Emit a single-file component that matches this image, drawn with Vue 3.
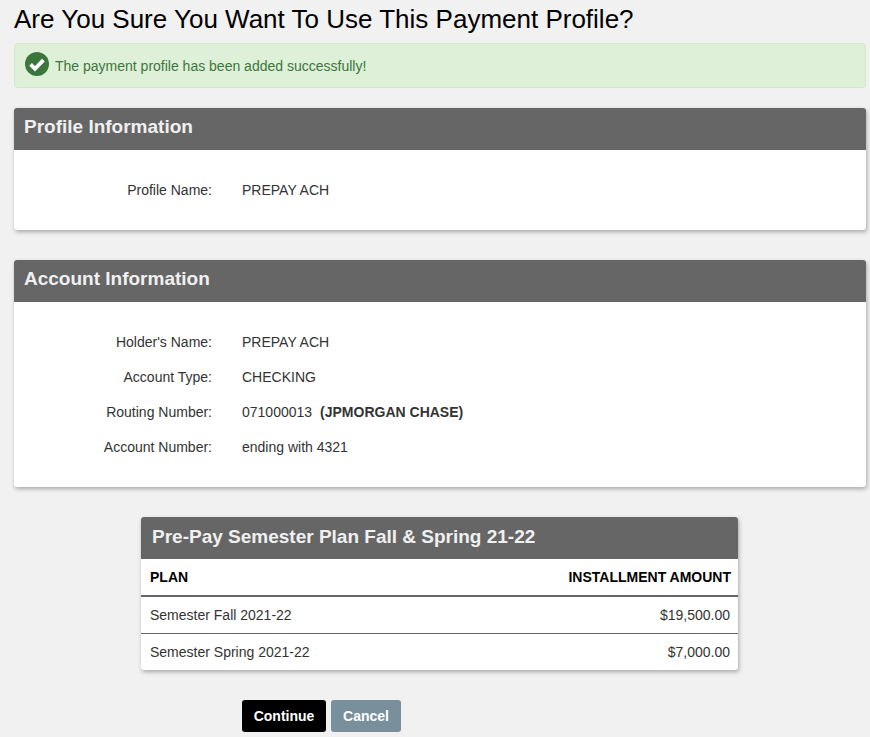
<template>
  <div class="page">
    <h1 class="page-title">Are You Sure You Want To Use This Payment Profile?</h1>

    <div class="alert-success">
      <svg class="alert-icon" width="24" height="24" viewBox="0 0 24 24">
        <circle cx="12" cy="12" r="12" fill="#3c763d" />
        <path d="M5.6 12.4l4.4 4.4 8.4-8.6" fill="none" stroke="#fff" stroke-width="3.8" />
      </svg>
      <span>The payment profile has been added successfully!</span>
    </div>

    <section class="panel profile-panel">
      <h2 class="panel-title">Profile Information</h2>
      <div class="panel-body">
        <div class="field-row">
          <span class="field-label">Profile Name:</span>
          <span class="field-value">PREPAY ACH</span>
        </div>
      </div>
    </section>

    <section class="panel account-panel">
      <h2 class="panel-title">Account Information</h2>
      <div class="panel-body">
        <div v-for="field in accountFields" :key="field.label" class="field-row">
          <span class="field-label">{{ field.label }}</span>
          <span class="field-value">{{ field.value }}<b v-if="field.bank" class="bank-name">(JPMORGAN CHASE)</b></span>
        </div>
      </div>
    </section>

    <section class="panel plan-panel">
      <h2 class="panel-title">Pre-Pay Semester Plan Fall &amp; Spring 21-22</h2>
      <table class="plan-table">
        <thead>
          <tr>
            <th>PLAN</th>
            <th class="amount">INSTALLMENT AMOUNT</th>
          </tr>
        </thead>
        <tbody>
          <tr v-for="row in planRows" :key="row.name">
            <td>{{ row.name }}</td>
            <td class="amount">{{ row.amount }}</td>
          </tr>
        </tbody>
      </table>
    </section>

    <div class="actions">
      <button class="btn btn-continue">Continue</button>
      <button class="btn btn-cancel">Cancel</button>
    </div>
  </div>
</template>

<script setup>
const accountFields = [
  { label: "Holder's Name:", value: 'PREPAY ACH' },
  { label: 'Account Type:', value: 'CHECKING' },
  { label: 'Routing Number:', value: '071000013', bank: true },
  { label: 'Account Number:', value: 'ending with 4321' }
];

const planRows = [
  { name: 'Semester Fall 2021-22', amount: '$19,500.00' },
  { name: 'Semester Spring 2021-22', amount: '$7,000.00' }
];
</script>

<style>
html,
body {
  background: #f1f1f1;
}
</style>

<style scoped>
.page {
  height: 737px;
  overflow: hidden;
  padding: 0 4px 0 14px;
  box-sizing: border-box;
  font-family: 'Liberation Sans', Arial, sans-serif;
  font-size: 14px;
  color: #333;
  background: #f1f1f1;
}

.page-title {
  margin: 0;
  height: 43px;
  line-height: 39px;
  font-size: 26px;
  font-weight: 400;
  color: #000;
}

.alert-success {
  display: flex;
  align-items: center;
  gap: 6px;
  height: 45px;
  box-sizing: border-box;
  padding: 0 10px;
  background: #dff0d8;
  border: 1px solid #d6e9c6;
  border-radius: 4px;
  color: #3c763d;
}

.alert-icon {
  flex: none;
  margin-top: -3px;
}

.panel {
  background: #fff;
  border-radius: 3px;
  box-shadow: 1px 2px 4px rgba(0, 0, 0, 0.3);
}

.profile-panel {
  margin-top: 20px;
}

.account-panel {
  margin-top: 30px;
}

.plan-panel {
  width: 597px;
  margin: 30px 0 0 127px;
}

.panel-title {
  margin: 0;
  height: 42px;
  line-height: 38px;
  padding-left: 10px;
  background: #666;
  border-radius: 3px 3px 0 0;
  color: #f0f0f0;
  font-size: 19px;
  font-weight: 700;
}

.plan-panel .panel-title {
  padding-left: 11px;
  line-height: 40px;
}

.panel-body {
  padding: 23px 0 22px;
}

.field-row {
  display: flex;
  gap: 30px;
  height: 35px;
  line-height: 35px;
}

.field-label {
  width: 198px;
  text-align: right;
}

.bank-name {
  margin-left: 8px;
}

.plan-table {
  width: 100%;
  border-collapse: collapse;
  font-size: 14px;
}

.plan-table th {
  height: 36px;
  padding: 0 7px 0 9px;
  text-align: left;
  color: #000;
  font-size: 14px;
  border-bottom: 2px solid #666;
}

.plan-table td {
  height: 36px;
  padding: 0 8px 0 9px;
  border-top: 1px solid #666;
}

.plan-table tbody tr:first-child td {
  border-top: none;
}

.plan-table .amount {
  text-align: right;
}

.actions {
  display: flex;
  gap: 5px;
  margin: 30px 0 0 228px;
}

.btn {
  height: 32px;
  border: none;
  border-radius: 3px;
  color: #fff;
  font-family: inherit;
  font-size: 14px;
  font-weight: 700;
}

.btn-continue {
  width: 84px;
  background: #000;
}

.btn-cancel {
  width: 70px;
  background: #78909c;
}
</style>
